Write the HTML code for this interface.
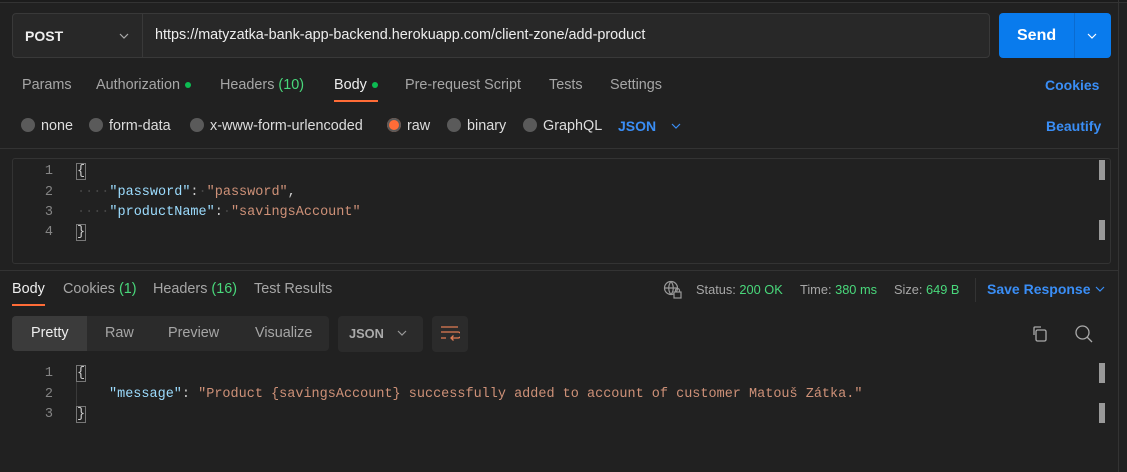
<!DOCTYPE html>
<html><head><meta charset="utf-8"><style>
*{margin:0;padding:0;box-sizing:border-box}
body{width:1127px;height:472px;background:#212121;font-family:"Liberation Sans",sans-serif;color:#a6a6a6;position:relative;overflow:hidden;font-size:14.4px}
.a{position:absolute;white-space:nowrap}
.mono{font-family:"Liberation Mono",monospace;font-size:13.5px}
.dot{display:inline-block;width:6px;height:6px;border-radius:50%;background:#0cbb52;vertical-align:middle;margin-left:5px}
.r{display:inline-block;width:14px;height:14px;border-radius:50%;background:#5a5a5a;vertical-align:-2px;margin-right:6px}
.g{color:#49d87b}
.b{color:#3a8ef6}
.k{color:#9cdcfe}
.s{color:#ce9178}
.ln{color:#858585;width:40px;text-align:right}
.wc{color:#444}
.br{outline:1px solid #777;color:#ccc}
</style></head><body>
<div class="a" style="left:0;top:0;width:1127px;height:3px;border-bottom:1px solid #333;background:#1c1c1c"></div>
<div class="a" style="left:1118px;top:0;width:1px;height:472px;background:#333"></div>
<div class="a" style="left:12px;top:13px;width:978px;height:45px;border:1px solid #393939;border-radius:4px;background:#282828"></div>
<div class="a" style="left:142px;top:14px;width:1px;height:43px;background:#393939"></div>
<div class="a" style="left:25px;top:28px;font-weight:bold;color:#eee;font-size:14px">POST</div>
<svg class="a" style="left:119px;top:33px" width="10" height="7"><path d="M1 1L5 5L9 1" stroke="#aaa" fill="none" stroke-width="1.2"/></svg>
<div class="a" style="left:155px;top:27px;color:#eee;font-size:14.4px">https://matyzatka-bank-app-backend.herokuapp.com/client-zone/add-product</div>
<div class="a" style="left:999px;top:13px;width:112px;height:45px;background:#097bed;border-radius:4px"></div>
<div class="a" style="left:1074px;top:13px;width:1px;height:45px;background:#0a6bd0"></div>
<div class="a" style="left:1017px;top:27px;color:#fff;font-weight:bold;font-size:16px">Send</div>
<svg class="a" style="left:1087px;top:33px" width="10" height="7"><path d="M1 1L5 5L9 1" stroke="#fff" fill="none" stroke-width="1.2"/></svg>
<div class="a" style="left:22px;top:77px">Params</div>
<div class="a" style="left:96px;top:77px">Authorization<span class="dot"></span></div>
<div class="a" style="left:220px;top:77px">Headers <span class="g">(10)</span></div>
<div class="a" style="left:334px;top:77px;color:#eee">Body<span class="dot"></span></div>
<div class="a" style="left:334px;top:100px;width:44px;height:2px;background:#ff6c37"></div>
<div class="a" style="left:405px;top:77px">Pre-request Script</div>
<div class="a" style="left:549px;top:77px">Tests</div>
<div class="a" style="left:610px;top:77px">Settings</div>
<div class="a b" style="left:1045px;top:77px;font-weight:bold;font-size:14px">Cookies</div>
<div class="a" style="left:21px;top:118px;color:#ddd"><span class="r"></span>none</div>
<div class="a" style="left:89px;top:118px;color:#ddd"><span class="r"></span>form-data</div>
<div class="a" style="left:190px;top:118px;color:#ddd"><span class="r"></span>x-www-form-urlencoded</div>
<div class="a" style="left:387px;top:118px;color:#ddd"><span class="r" style="background:#ff6c37;box-shadow:inset 0 0 0 2px #5a5a5a"></span>raw</div>
<div class="a" style="left:447px;top:118px;color:#ddd"><span class="r"></span>binary</div>
<div class="a" style="left:523px;top:118px;color:#ddd"><span class="r"></span>GraphQL</div>
<div class="a b" style="left:618px;top:118px;font-weight:bold;font-size:14px">JSON</div>
<svg class="a" style="left:671px;top:123px" width="10" height="7"><path d="M1 1L5 5L9 1" stroke="#3a8ef6" fill="none" stroke-width="1.2"/></svg>
<div class="a b" style="left:1046px;top:118px;font-weight:bold;font-size:14px">Beautify</div>
<div class="a" style="left:0;top:148px;width:1118px;height:1px;background:#333"></div>
<div class="a" style="left:12px;top:158px;width:1099px;height:106px;border:1px solid #333;border-radius:3px"></div>
<div class="a" style="left:1099px;top:160px;width:6px;height:20px;background:#999"></div>
<div class="a" style="left:1099px;top:220px;width:6px;height:20px;background:#999"></div>
<div class="a mono ln" style="left:13px;top:164px">1</div>
<div class="a mono ln" style="left:13px;top:185px">2</div>
<div class="a mono ln" style="left:13px;top:205px">3</div>
<div class="a mono ln" style="left:13px;top:225px">4</div>
<div class="a mono" style="left:77px;top:164px"><span class="br">{</span></div>
<div class="a mono" style="left:77px;top:185px"><span class="wc">····</span><span class="k">"password"</span><span style="color:#ccc">:</span><span class="wc">·</span><span class="s">"password"</span><span style="color:#ccc">,</span></div>
<div class="a mono" style="left:77px;top:205px"><span class="wc">····</span><span class="k">"productName"</span><span style="color:#ccc">:</span><span class="wc">·</span><span class="s">"savingsAccount"</span></div>
<div class="a mono" style="left:77px;top:225px"><span class="br">}</span></div>
<div class="a" style="left:0;top:270px;width:1118px;height:1px;background:#333"></div>
<div class="a" style="left:12px;top:281px;color:#eee">Body</div>
<div class="a" style="left:12px;top:304px;width:33px;height:2px;background:#ff6c37"></div>
<div class="a" style="left:63px;top:281px">Cookies <span class="g">(1)</span></div>
<div class="a" style="left:153px;top:281px">Headers <span class="g">(16)</span></div>
<div class="a" style="left:254px;top:281px">Test Results</div>
<svg class="a" style="left:663px;top:280px" width="19" height="19" fill="none" stroke="#999" stroke-width="1.2"><circle cx="8" cy="8" r="6.5"/><path d="M1.5 8H14.5M8 1.5C5 5 5 11 8 14.5M8 1.5C11 5 11 11 8 14.5"/><rect x="11" y="12" width="7" height="6" fill="#212121"/><path d="M12.5 12V10.5a2 2 0 0 1 4 0V12"/></svg>
<div class="a" style="left:696px;top:282px;font-size:12.8px">Status: <span class="g">200 OK</span></div>
<div class="a" style="left:800px;top:282px;font-size:12.8px">Time: <span class="g">380 ms</span></div>
<div class="a" style="left:894px;top:282px;font-size:12.8px">Size: <span class="g">649 B</span></div>
<div class="a" style="left:975px;top:278px;width:1px;height:24px;background:#333"></div>
<div class="a b" style="left:987px;top:281px;font-weight:bold;font-size:14px">Save Response</div>
<svg class="a" style="left:1095px;top:286px" width="10" height="7"><path d="M1 1L5 5L9 1" stroke="#3a8ef6" fill="none" stroke-width="1.2"/></svg>
<div class="a" style="left:12px;top:316px;width:317px;height:35px;background:#2b2b2b;border-radius:4px"></div>
<div class="a" style="left:12px;top:316px;width:75px;height:35px;background:#3b3b3b;border-radius:4px 0 0 4px"></div>
<div class="a" style="left:31px;top:325px;color:#eee">Pretty</div>
<div class="a" style="left:105px;top:325px">Raw</div>
<div class="a" style="left:168px;top:325px">Preview</div>
<div class="a" style="left:255px;top:325px">Visualize</div>
<div class="a" style="left:338px;top:316px;width:85px;height:36px;background:#2b2b2b;border-radius:4px"></div>
<div class="a" style="left:349px;top:326px;font-weight:bold;font-size:12.8px;color:#aaa">JSON</div>
<svg class="a" style="left:397px;top:330px" width="10" height="7"><path d="M1 1L5 5L9 1" stroke="#999" fill="none" stroke-width="1.2"/></svg>
<div class="a" style="left:432px;top:316px;width:36px;height:36px;background:#2b2b2b;border-radius:4px"></div>
<svg class="a" style="left:440px;top:325px" width="20" height="18" fill="none" stroke="#e07b53" stroke-width="1.3"><path d="M1 2H18M1 7H18a3 3 0 0 1 0 6H11M13.5 10.5L11 13L13.5 15.5M1 13H6"/></svg>
<svg class="a" style="left:1030px;top:325px" width="18" height="18" fill="none" stroke="#aaa" stroke-width="1.3"><path d="M4 10V3a1 1 0 0 1 1-1h6"/><rect x="6" y="5" width="10" height="11" rx="1.5"/></svg>
<svg class="a" style="left:1074px;top:324px" width="20" height="20" fill="none" stroke="#aaa" stroke-width="1.3"><circle cx="8.5" cy="8.5" r="6.5"/><path d="M13 13L18 18"/></svg>
<div class="a" style="left:1099px;top:363px;width:6px;height:20px;background:#999"></div>
<div class="a" style="left:1099px;top:403px;width:6px;height:20px;background:#999"></div>
<div class="a mono ln" style="left:13px;top:366px">1</div>
<div class="a mono ln" style="left:13px;top:387px">2</div>
<div class="a mono ln" style="left:13px;top:407px">3</div>
<div class="a mono" style="left:77px;top:366px"><span class="br">{</span></div>
<div class="a" style="left:76px;top:382px;width:1px;height:24px;background:#3a3a3a"></div>
<div class="a mono" style="left:109px;top:387px"><span class="k">"message"</span><span style="color:#ccc">: </span><span class="s">"Product {savingsAccount} successfully added to account of customer Matouš Zátka."</span></div>
<div class="a mono" style="left:77px;top:407px"><span class="br">}</span></div>
</body></html>
